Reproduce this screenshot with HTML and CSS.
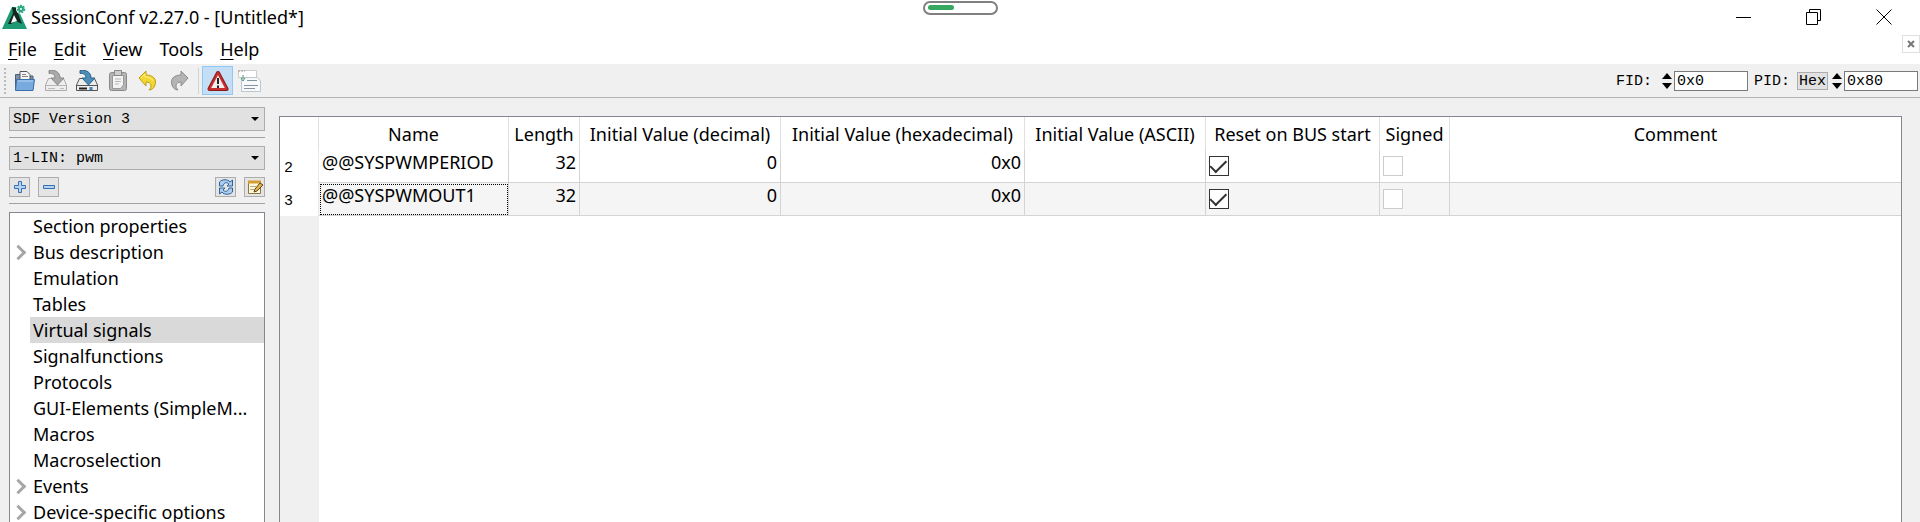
FILE: index.html
```
<!DOCTYPE html>
<html lang="en">
<head>
<meta charset="UTF-8">
<meta name="viewport" content="width=device-width, initial-scale=1.0">
<title>SessionConf v2.27.0 - [Untitled*]</title>
<link rel="stylesheet" href="styles.css">
</head>
<body>
<header class="titlebar">
  <div class="brand">
    <svg class="logo" width="25" height="26" viewBox="0 0 25 26">
      <path d="M10 3 L15 3 L25 25 H0 Z" fill="#1d9a74"/>
      <path d="M10 3 L14 4 L20 20 L14 17 L9 20 H6 L11 9 Z" fill="#14261f"/>
      <path d="M12 11 L15 17 L9 19 Z" fill="#fff"/>
      <circle cx="19" cy="5" r="5" fill="#fff"/>
      <circle cx="19" cy="5" r="2" fill="none" stroke="#27a57f" stroke-width="2"/>
      <circle cx="19" cy="5" r="3.500" fill="none" stroke="#27a57f" stroke-width="1.500" stroke-dasharray="2 1"/>
    </svg>
    <h1 class="title">SessionConf v2.27.0 - [Untitled*]</h1>
  </div>
  <div class="progress"><div class="progress-fill"></div></div>
  <div class="window-buttons">
    <button class="win-btn" aria-label="Minimize"><svg width="16" height="16" viewBox="0 0 16 16"><path d="M0 8.500H15" stroke="#000"/></svg></button>
    <button class="win-btn" aria-label="Restore"><svg width="16" height="16" viewBox="0 0 16 16" fill="none" stroke="#000"><path d="M.5 3.500H11.500V15.500H.5Z M3.500 3.500V.5H14.500V11.500H11.500"/></svg></button>
    <button class="win-btn" aria-label="Close"><svg width="16" height="16" viewBox="0 0 16 16"><path d="M.5 .5L15.500 15.500M15.500 .5L.5 15.500" stroke="#000"/></svg></button>
  </div>
</header>

<div class="menubar">
  <nav class="menu">
    <a href="#"><u>F</u>ile</a>
    <a href="#"><u>E</u>dit</a>
    <a href="#"><u>V</u>iew</a>
    <a href="#">Tools</a>
    <a href="#"><u>H</u>elp</a>
  </nav>
  <button class="doc-close" aria-label="Close document"><svg width="8" height="8" viewBox="0 0 8 8"><path d="M1 1L7 7M7 1L1 7" stroke="#777" stroke-width="2"/></svg></button>
</div>

<div class="toolbar">
  <div class="grip"></div>
  <button class="tool" aria-label="Open">
    <svg width="22" height="22" viewBox="0 0 22 22"><path d="M1.500 19V4.500H7L8 6H19V19Z" fill="#7f93a8" stroke="#46617f"/><path d="M6 10V1.500H13L16 4.500V10Z" fill="#f4f4f4" stroke="#555"/><path d="M8 4.500H12M8 6.500H14" stroke="#888"/><path d="M2.500 9.500H20.500L19 20.500H1.500Z" fill="#78aadf" stroke="#3a6ea8"/><path d="M4 11H19" stroke="#b4d3f3"/></svg>
  </button>
  <button class="tool" aria-label="Save">
    <svg width="22" height="22" viewBox="0 0 22 22"><path d="M3.500 8.500H18.500L21.500 15V20.500H.5V15Z" fill="#eee" stroke="#aaa"/><path d="M.5 15.500H21.500" stroke="#b5b5b5"/><path d="M3 18.500H10M15 18.500H19" stroke="#bbb"/><path d="M4 .5C10 -.5 15 2 15 8H19L12.500 15L6 8H10C10 5 8 3 4 3.500Z" fill="#a9a9a9" stroke="#888"/></svg>
  </button>
  <button class="tool" aria-label="Save as">
    <svg width="22" height="22" viewBox="0 0 22 22"><path d="M3.500 8.500H18.500L21.500 15V20.500H.5V15Z" fill="#eee" stroke="#555"/><path d="M.5 15.500H21.500" stroke="#555"/><path d="M3 18.500H11" stroke="#222" stroke-width="2"/><path d="M15 17V20" stroke="#3d84bd" stroke-width="3"/><path d="M4 .5C10 -.5 15 2 15 8H19L12.500 15L6 8H10C10 5 8 3 4 3.500Z" fill="#4c8db9" stroke="#2d6189"/></svg>
  </button>
  <button class="tool" aria-label="Paste">
    <svg width="22" height="22" viewBox="0 0 22 22"><rect x="2.500" y="2.500" width="17" height="18" rx="2" fill="#b4b4b4" stroke="#8a8a8a"/><path d="M5.500 5.500H16.500V15L13.500 18.500H5.500Z" fill="#f3f3f3" stroke="#999"/><path d="M7.500 .5H14.500V5.500H7.500Z" fill="#ccc" stroke="#8a8a8a"/><path d="M8 9H14M8 11.500H14M8 14H12" stroke="#b5b5b5"/></svg>
  </button>
  <button class="tool" aria-label="Undo">
    <svg width="22" height="22" viewBox="0 0 22 22"><path d="M1 8L8 1V5C15 5 19 9 17 15C16 18 14 20 11 20C14 17 14 12 8 12V16Z" fill="#f2d730" stroke="#bd9d19"/><path d="M3 8L7 4V7C11 7 14 8 15 11" fill="none" stroke="#fff08b"/></svg>
  </button>
  <button class="tool" aria-label="Redo">
    <svg width="22" height="22" viewBox="0 0 22 22"><path d="M19 8L12 1V5C5 5 1 9 3 15C4 18 6 20 9 20C6 17 6 12 12 12V16Z" fill="#b4b4b4" stroke="#8d8d8d"/></svg>
  </button>
  <div class="separator"></div>
  <button class="tool active" aria-label="Show warnings">
    <svg width="22" height="22" viewBox="0 0 22 22"><path d="M11 3L19.500 19H2.500Z" fill="#fff" stroke="#8d1919" stroke-width="4" stroke-linejoin="round"/><path d="M11 3L19.500 19H2.500Z" fill="#f4eeee" stroke="#c6302f" stroke-width="2" stroke-linejoin="round"/><path d="M11 8V14M11 15.500V18" stroke="#222" stroke-width="2"/></svg>
  </button>
  <button class="tool" aria-label="Log">
    <svg width="24" height="24" viewBox="0 0 24 24"><path d="M1.500 1.500H19.500V8.500H1.500Z" fill="#fff" stroke="#ccc"/><path d="M1 2H8" stroke="#999" stroke-dasharray="2 1"/><path d="M4.500 8.500H20.500L23.500 12V22.500H4.500Z" fill="#f7f9fb" stroke="#bbc6cf"/><path d="M10 11.500H20M7 16.500H21M7 19.500H18" stroke="#86939e"/><path d="M6 6V10M4 9L6 12L8 9" fill="none" stroke="#4c9670"/></svg>
  </button>
  <div class="ids">
    <label for="fid">FID:</label>
    <div class="spin"><button class="up" aria-label="FID up"></button><button class="down" aria-label="FID down"></button></div>
    <input class="id-input" type="text" id="fid" value="0x0">
    <label class="pid-label" for="pid">PID:</label>
    <button class="hex">Hex</button>
    <div class="spin"><button class="up" aria-label="PID up"></button><button class="down" aria-label="PID down"></button></div>
    <input class="id-input" type="text" id="pid" value="0x80">
  </div>
</div>

<main class="content">
  <aside class="sidebar">
    <select class="combo" aria-label="SDF version"><option>SDF Version 3</option></select>
    <hr class="line">
    <select class="combo" aria-label="Bus"><option>1-LIN: pwm</option></select>
    <div class="bus-buttons">
      <button class="small-btn" aria-label="Add"><svg width="14" height="14" viewBox="0 0 14 14"><path d="M5.500 1.500H8.500V5.500H12.500V8.500H8.500V12.500H5.500V8.500H1.500V5.500H5.500Z" fill="#b5d3f2" stroke="#386fae"/></svg></button>
      <button class="small-btn" aria-label="Remove"><svg width="14" height="14" viewBox="0 0 14 14"><path d="M1.500 5.500H12.500V8.500H1.500Z" fill="#b5d3f2" stroke="#386fae"/></svg></button>
      <button class="small-btn push" aria-label="Refresh"><svg width="16" height="16" viewBox="0 0 16 16"><path d="M1.500 7V3C4 0 10 0 12 3L14.500 1V7H9L11 5C9 3 6 3 5 7Z" fill="#a9cdef" stroke="#2e649b"/><path d="M14.500 9V13C12 16 6 16 4 13L1.500 15V9H7L5 11C7 13 10 13 11 9Z" fill="#a9cdef" stroke="#2e649b"/></svg></button>
      <button class="small-btn" aria-label="Edit"><svg width="16" height="16" viewBox="0 0 16 16"><path d="M1.500 2.500H13.500V14.500H1.500Z" fill="#fff8d9" stroke="#8e7440"/><path d="M1 3H14" stroke="#d39d32" stroke-width="3"/><path d="M3 7.500H9M3 10.500H7" stroke="#b7aa87"/><path d="M7 13L8 10L13 4L16 6L10 12Z" fill="#e5b445" stroke="#57482a"/></svg></button>
    </div>
    <hr class="line">
    <ul class="tree">
      <li><a href="#">Section properties</a></li>
      <li class="parent"><a href="#">Bus description</a></li>
      <li><a href="#">Emulation</a></li>
      <li><a href="#">Tables</a></li>
      <li><a class="selected" href="#">Virtual signals</a></li>
      <li><a href="#">Signalfunctions</a></li>
      <li><a href="#">Protocols</a></li>
      <li><a href="#">GUI-Elements (SimpleM...</a></li>
      <li><a href="#">Macros</a></li>
      <li><a href="#">Macroselection</a></li>
      <li class="parent"><a href="#">Events</a></li>
      <li class="parent"><a href="#">Device-specific options</a></li>
    </ul>
  </aside>

  <section class="view">
    <table class="signals">
      <colgroup>
        <col class="c-row"><col class="c-name"><col class="c-length"><col class="c-dec"><col class="c-hex"><col class="c-ascii"><col class="c-reset"><col class="c-signed"><col>
      </colgroup>
      <thead>
        <tr>
          <th></th><th>Name</th><th>Length</th><th>Initial Value (decimal)</th><th>Initial Value (hexadecimal)</th><th>Initial Value (ASCII)</th><th>Reset on BUS start</th><th>Signed</th><th>Comment</th>
        </tr>
      </thead>
      <tbody>
        <tr>
          <th>2</th>
          <td>@@SYSPWMPERIOD</td>
          <td class="num">32</td>
          <td class="num">0</td>
          <td class="num">0x0</td>
          <td></td>
          <td><input class="check" type="checkbox" aria-label="Reset on BUS start, row 2" checked></td>
          <td><input class="check" type="checkbox" aria-label="Signed, row 2" disabled></td>
          <td></td>
        </tr>
        <tr>
          <th>3</th>
          <td class="current">@@SYSPWMOUT1</td>
          <td class="num">32</td>
          <td class="num">0</td>
          <td class="num">0x0</td>
          <td></td>
          <td><input class="check" type="checkbox" aria-label="Reset on BUS start, row 3" checked></td>
          <td><input class="check" type="checkbox" aria-label="Signed, row 3" disabled></td>
          <td></td>
        </tr>
      </tbody>
    </table>
    <div class="gutter"></div>
  </section>
</main>
</body>
</html>
```
FILE: styles.css
```
* {
  box-sizing: border-box;
}
body {
  margin: 0;
  height: 100vh;
  overflow: hidden;
  display: flex;
  flex-direction: column;
  background-color: #f0f0f0;
  color: #000;
  font-family: "Noto Sans", "Open Sans", sans-serif;
  font-size: 18px;
}
button {
  margin: 0;
  padding: 0;
  border: none;
  background: none;
  color: inherit;
  font: inherit;
}
svg {
  display: block;
}
a {
  color: inherit;
  text-decoration: none;
}

/* title bar */
.titlebar {
  display: grid;
  grid-template-columns: 1fr auto 1fr;
  align-items: center;
  height: 34px;
  background-color: #fff;
}
.brand {
  display: flex;
  align-items: center;
  gap: 4px;
  padding-left: 2px;
}
.title {
  margin: 0;
  font-size: 18px;
  line-height: 34px;
  font-weight: normal;
}
.progress {
  align-self: start;
  width: 75px;
  height: 14px;
  margin-top: 1px;
  padding: 2px 3px;
  border: 2px solid #808080;
  border-radius: 7px;
}
.progress-fill {
  width: 40%;
  height: 5px;
  border-radius: 3px;
  background-color: #35a862;
}
.window-buttons {
  display: flex;
  justify-content: flex-end;
  gap: 22px;
  padding-right: 12px;
}
.win-btn {
  display: flex;
  justify-content: center;
  width: 48px;
}

/* menu */
.menubar {
  display: flex;
  align-items: center;
  justify-content: space-between;
  height: 30px;
  background-color: #fff;
}
.menu {
  display: flex;
  gap: 17px;
  padding-left: 8px;
}
.menu u {
  text-underline-offset: 3px;
}
.doc-close {
  display: flex;
  align-items: center;
  justify-content: center;
  align-self: flex-start;
  width: 18px;
  height: 18px;
  margin-top: 1px;
  border: 1px solid #e0e0e0;
}

/* toolbar */
.toolbar {
  display: flex;
  align-items: center;
  height: 34px;
  padding: 0 2px 0 4px;
  border-bottom: 1px solid #b4b4b4;
}
.grip {
  width: 3px;
  height: 26px;
  margin-right: 2px;
  border-left: 2px dotted #bbb;
}
.tool {
  display: flex;
  align-items: center;
  justify-content: center;
  width: 31px;
  height: 29px;
}
.tool.active {
  border: 1px solid #90c8f6;
  background-color: #c3def5;
}
.separator {
  width: 1px;
  height: 26px;
  margin: 0 3px;
  background-color: #d2d2d2;
}
.ids {
  display: flex;
  align-items: center;
  margin-left: auto;
  padding-top: 1px;
  font-family: "Liberation Mono", monospace;
  font-size: 15px;
}
.spin {
  display: flex;
  flex-direction: column;
  gap: 4px;
  margin: 0 2px 0 4px;
}
.ids label + .spin {
  margin-left: 10px;
}
.up, .down {
  border-left: 5px solid transparent;
  border-right: 5px solid transparent;
}
.up {
  border-bottom: 6px solid #000;
}
.down {
  border-top: 6px solid #000;
}
.id-input {
  width: 74px;
  height: 20px;
  padding: 0 2px;
  border: 1px solid #7a7a7a;
  background-color: #fff;
  font: inherit;
}
.pid-label {
  margin: 0 7px 0 6px;
}
.hex {
  height: 18px;
  padding: 0 1px;
  border: 1px solid #adadad;
  background-color: #e1e1e1;
}

/* content */
.content {
  flex: 1;
  min-height: 0;
  display: flex;
  gap: 14px;
  padding: 9px 18px 0 9px;
}
.sidebar {
  width: 256px;
  flex: none;
  display: flex;
  flex-direction: column;
}
.combo {
  flex: none;
  width: 100%;
  height: 24px;
  padding: 0 3px;
  border: 1px solid #adadad;
  border-radius: 0;
  appearance: none;
  color: #000;
  background: #e1e1e1 url("data:image/svg+xml,%3Csvg xmlns='http://www.w3.org/2000/svg' width='8' height='4'%3E%3Cpath d='M0 0H8L4 4Z'/%3E%3C/svg%3E") no-repeat right 5px center;
  font-family: "Liberation Mono", monospace;
  font-size: 15px;
}
.line {
  flex: none;
  width: 100%;
  margin: 6px 0 8px;
  border: none;
  border-top: 1px solid #a0a0a0;
}
.bus-buttons {
  display: flex;
  gap: 8px;
  margin-top: 7px;
}
.small-btn {
  display: flex;
  align-items: center;
  justify-content: center;
  width: 21px;
  height: 20px;
  border: 1px solid #adadad;
  background-color: #e4e4e4;
}
.small-btn.push {
  margin-left: auto;
}
.tree {
  flex: 1;
  min-height: 0;
  overflow: hidden;
  margin: 0;
  padding: 0;
  border: 1px solid #828790;
  border-bottom: none;
  background-color: #fff;
  list-style: none;
}
.tree li {
  display: grid;
  grid-template-columns: 20px 1fr;
  align-items: center;
}
.tree li::before {
  content: "";
  width: 8px;
  height: 8px;
  margin-left: 3px;
}
.tree .parent::before {
  border-top: 3px solid #a6a6a6;
  border-right: 3px solid #a6a6a6;
  transform: rotate(45deg);
}
.tree a {
  padding: 1px 0 0 3px;
  line-height: 25px;
  white-space: nowrap;
}
.tree .selected {
  background-color: #d9d9d9;
}

/* signal table */
.view {
  flex: 1;
  min-width: 0;
  display: flex;
  flex-direction: column;
  margin-top: 9px;
  border: 1px solid #828790;
  border-bottom: none;
  background-color: #fff;
}
.signals {
  width: 100%;
  table-layout: fixed;
  border-collapse: separate;
  border-spacing: 0;
}
.c-row { width: 39px; }
.c-name { width: 190px; }
.c-length { width: 71px; }
.c-dec { width: 201px; }
.c-hex { width: 244px; }
.c-ascii { width: 181px; }
.c-reset { width: 174px; }
.c-signed { width: 70px; }
.signals th {
  padding: 0;
  font-weight: normal;
  white-space: nowrap;
}
.signals thead th {
  height: 33px;
  padding-top: 1px;
  line-height: 32px;
  border-right: 1px solid #e0e0e0;
}
.signals tbody th {
  padding: 4px 0 0 4px;
  border-right: 1px solid #e8e8e8;
  font-family: "Liberation Mono", monospace;
  font-size: 15px;
  text-align: left;
}
.signals td {
  height: 33px;
  padding: 0 3px;
  border-right: 1px solid #d4d4d4;
  border-bottom: 1px solid #d4d4d4;
  line-height: 24px;
  vertical-align: top;
  white-space: nowrap;
}
.signals tr > :last-child {
  border-right: none;
}
.signals tbody tr:nth-child(even) td {
  background-color: #f5f5f5;
}
.signals .num {
  text-align: right;
}
.signals .current {
  outline: 1px dotted #000;
  outline-offset: -2px;
}
.check {
  display: grid;
  place-items: center;
  width: 20px;
  height: 20px;
  margin: 6px 0 0;
  border: 1px solid #333;
  background-color: #fff;
  appearance: none;
}
.check:checked::before {
  content: "";
  width: 14px;
  height: 7px;
  border-left: 2px solid #333;
  border-bottom: 2px solid #333;
  transform: rotate(-45deg) translate(1px, -2px);
}
.check:disabled {
  border-color: #ccc;
}
.gutter {
  flex: 1;
  width: 39px;
  background-color: #f0f0f0;
}
```
